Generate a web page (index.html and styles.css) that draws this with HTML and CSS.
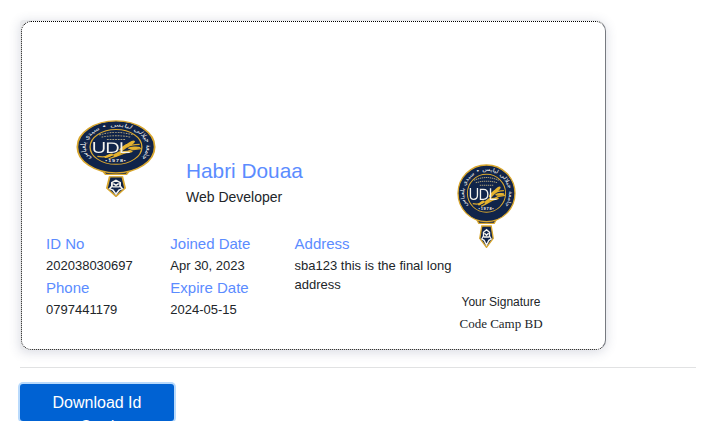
FILE: index.html
```html
<!DOCTYPE html>
<html lang="en">
<head>
<meta charset="utf-8">
<title>Id Card</title>
<link rel="stylesheet" href="styles.css">
</head>
<body>
<svg class="defs" aria-hidden="true">
  <symbol id="crest" viewBox="0 0 176 252" preserveAspectRatio="none">
    <path d="M54 158h68l-11 20H65z" fill="#10244a" stroke="#d9a72e" stroke-width="4"/>
    <circle cx="88" cy="88" r="85" fill="#10244a" stroke="#d9a72e" stroke-width="4"/>
    <circle cx="88" cy="88" r="57" fill="none" stroke="#d9a72e" stroke-width="3"/>
    <path id="ring" d="M42 137A67 67 0 1 1 134 137" fill="none"/>
    <text class="arabic"><textPath href="#ring" startOffset="50%" text-anchor="middle" textLength="290" lengthAdjust="spacingAndGlyphs">جامعة جيلالي ليابس • سيدي بلعباس</textPath></text>
    <path d="M51 49Q88 32 125 49M56 56Q88 47 121 56M68 64H108" fill="none" stroke="#a99d79" stroke-width="3" stroke-dasharray="4 2"/>
    <path d="M47 119Q81 127 111 89Q120 80 140 80M72 127Q102 112 121 98L143 94" fill="none" stroke="#d9a72e" stroke-width="4"/>
    <g fill="#e6b42f">
      <ellipse cx="119" cy="78" rx="14" ry="5" transform="rotate(-43 119 78)"/>
      <ellipse cx="105" cy="89" rx="14" ry="4" transform="rotate(-48 105 89)"/>
      <ellipse cx="128" cy="91" rx="14" ry="4" transform="rotate(-5 128 91)"/>
      <ellipse cx="111" cy="105" rx="14" ry="4" transform="rotate(-8 111 105)"/>
      <ellipse cx="92" cy="112" rx="12" ry="4" transform="rotate(-42 92 112)"/>
      <ellipse cx="72" cy="117" rx="11" ry="4" transform="rotate(-35 72 117)"/>
    </g>
    <path d="M40 72V96Q40 106 50 106Q61 106 61 94V72M70 106V76H79Q92 76 92 91Q92 106 79 106ZM100 73V106H118" fill="none" stroke="#f4f3ee" stroke-width="4"/>
    <text class="year" x="88" y="137" text-anchor="middle">•1978•</text>
    <path d="M74 186H102L108 223L88 250L68 223Z" fill="#10244a" stroke="#d9a72e" stroke-width="4"/>
    <path d="M88 197L79 205V216L74 225L81 229L88 243L95 229L102 225L97 216V205ZM82 208L88 214L94 208M80 219H96" fill="none" stroke="#f4f3ee" stroke-width="4"/>
  </symbol>
</svg>
<main class="page">
  <div class="frame">
    <section class="card">
      <div class="person">
        <header class="profile">
          <svg class="photo"><use href="#crest"/></svg>
          <div class="who">
            <h1>Habri Douaa</h1>
            <p>Web Developer</p>
          </div>
        </header>
        <div class="details">
          <dl><dt>ID No</dt><dd>202038030697</dd><dt>Phone</dt><dd>0797441179</dd></dl>
          <dl><dt>Joined Date</dt><dd>Apr 30, 2023</dd><dt>Expire Date</dt><dd>2024-05-15</dd></dl>
          <dl><dt>Address</dt><dd>sba123 this is the final long address</dd></dl>
        </div>
      </div>
      <aside class="signature">
        <svg class="seal"><use href="#crest"/></svg>
        <p class="sign-label">Your Signature</p>
        <p class="sign-name">Code Camp BD</p>
      </aside>
    </section>
  </div>
  <hr>
  <button class="download">Download Id Card</button>
</main>
</body>
</html>
```
FILE: styles.css
```css
* { box-sizing: border-box; }
body {
  margin: 0;
  background: #fff;
  color: #212529;
  font-family: "Liberation Sans", Arial, sans-serif;
  overflow: hidden;
}
h1, p, dl, dd { margin: 0; }
.defs { display: block; width: 0; height: 0; }
.page { padding: 20px 20px 0; }
.frame {
  width: 586px;
  height: 330px;
  padding: 1px 0 0 1px;
  border-radius: 4px 10px 10px 4px;
  background: #e9eaec;
  box-shadow: 0 2px 12px rgba(60, 70, 110, .2);
}
.card {
  display: flex;
  width: 585px;
  height: 329px;
  border: 1px dotted #000;
  border-right: 1px solid #777a80;
  border-radius: 10px;
  background: #fff;
}
.person { width: 434px; padding: 98px 0 0 24px; }
.profile { display: flex; height: 114px; padding-left: 30px; }
.photo { width: 80px; height: 77px; }
.who { padding: 38px 0 0 30px; }
.who h1 { color: #5b8cff; font-size: 20.8px; font-weight: 400; line-height: 26px; }
.who p { margin-top: 4px; font-size: 14px; line-height: 18px; }
.details { display: flex; }
.details dl { width: 124.3px; }
.details dl:last-child { width: 161px; }
dt { color: #5b8cff; font-size: 15px; line-height: 20px; height: 20px; }
dd { min-height: 24px; padding-top: 2px; font-size: 13px; line-height: 19px; }
.signature {
  display: flex;
  flex-direction: column;
  align-items: center;
  width: 90px;
  padding-top: 142px;
}
.seal { width: 59px; height: 84px; margin-right: 29px; }
.sign-label { margin-top: 45px; font-size: 12px; line-height: 18px; white-space: nowrap; }
.sign-name { margin-top: 4px; font-family: "Liberation Serif", serif; font-size: 13px; line-height: 18px; white-space: nowrap; }
hr { height: 1px; margin: 17px 0 16px; border: 0; background: #e1e2e3; }
.download {
  display: block;
  width: 154px;
  height: 37px;
  padding: 7px 30px 0;
  border: 0;
  border-radius: 3px;
  background: #0062d3;
  box-shadow: 0 0 0 2px #b9dafc;
  color: #fff;
  font: 16px/24px "Liberation Sans", Arial, sans-serif;
  text-align: center;
  overflow: visible;
  clip-path: inset(-2px);
}
.arabic { fill: #f4f3ee; font: 16px "DejaVu Sans", sans-serif; direction: rtl; }
.year { fill: #f4f3ee; font: bold 12px "Liberation Sans", sans-serif; letter-spacing: 2px; }
```
